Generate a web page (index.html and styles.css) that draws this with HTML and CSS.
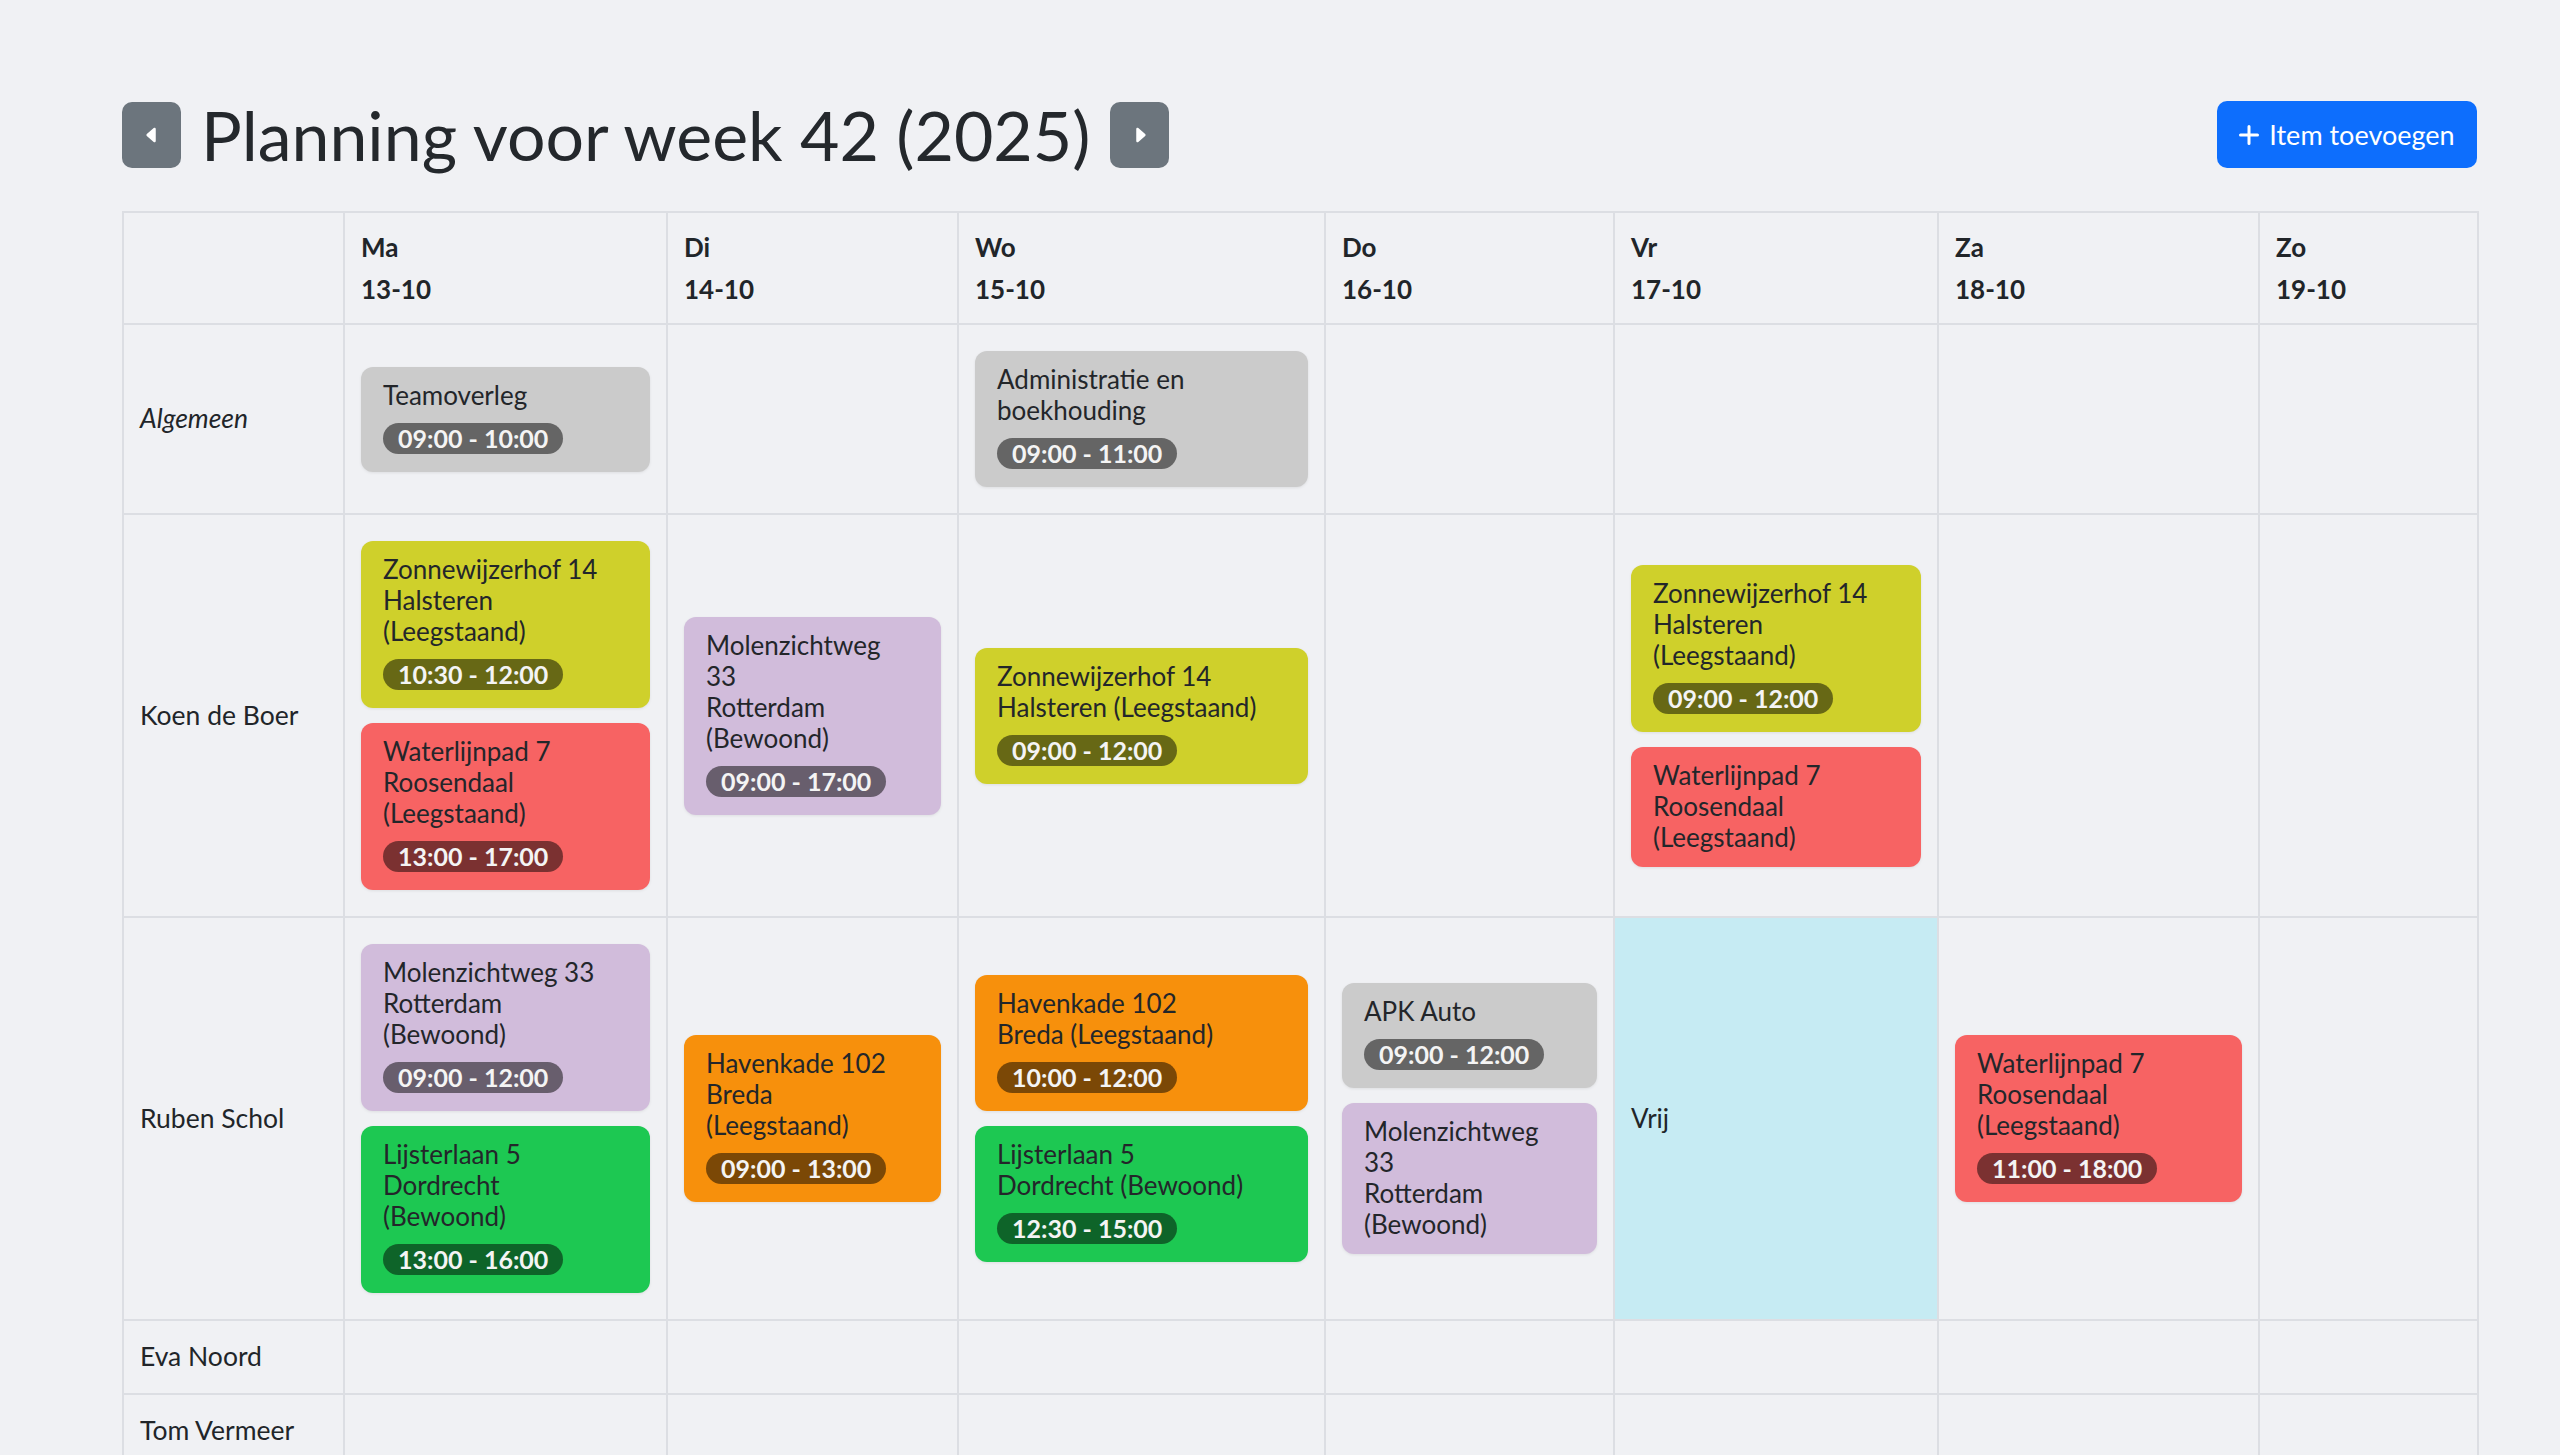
FILE: index.html
```html
<!DOCTYPE html>
<html lang="nl">
<head>
<meta charset="utf-8">
<title>Planning voor week 42 (2025)</title>
<link rel="stylesheet" href="styles.css">
</head>
<body>
<div class="page">
  <header class="toolbar">
    <div class="week-nav">
      <button class="nav-btn" type="button" aria-label="Vorige week">
        <svg viewBox="0 0 16 16" class="caret"><path d="m3.86 8.753 5.482 4.796c.646.566 1.658.106 1.658-.753V3.204a1 1 0 0 0-1.659-.753l-5.48 4.796a1 1 0 0 0 0 1.506z"/></svg>
      </button>
      <h1 class="title">Planning voor week 42 (2025)</h1>
      <button class="nav-btn" type="button" aria-label="Volgende week">
        <svg viewBox="0 0 16 16" class="caret"><path d="m12.14 8.753-5.482 4.796c-.646.566-1.658.106-1.658-.753V3.204a1 1 0 0 1 1.659-.753l5.48 4.796a1 1 0 0 1 0 1.506z"/></svg>
      </button>
    </div>
    <button class="add-btn" type="button">
      <svg viewBox="0 0 20 20" class="plus"><path d="M10 1.5v17M1.5 10h17"/></svg>
      <span>Item toevoegen</span>
    </button>
  </header>

  <table class="planning">
    <colgroup>
      <col class="c-name"><col class="c-ma"><col class="c-di"><col class="c-wo"><col class="c-do"><col class="c-vr"><col class="c-za"><col class="c-zo">
    </colgroup>
    <thead>
      <tr>
        <th></th>
        <th>Ma<br>13-10</th>
        <th>Di<br>14-10</th>
        <th>Wo<br>15-10</th>
        <th>Do<br>16-10</th>
        <th>Vr<br>17-10</th>
        <th>Za<br>18-10</th>
        <th>Zo<br>19-10</th>
      </tr>
    </thead>
    <tbody>
      <tr>
        <td class="name"><em>Algemeen</em></td>
        <td><div class="stack">
          <div class="item gray"><div class="item-text">Teamoverleg</div><span class="badge">09:00 - 10:00</span></div>
        </div></td>
        <td></td>
        <td><div class="stack">
          <div class="item gray"><div class="item-text">Administratie en<br>boekhouding</div><span class="badge">09:00 - 11:00</span></div>
        </div></td>
        <td></td><td></td><td></td><td></td>
      </tr>
      <tr>
        <td class="name">Koen de Boer</td>
        <td><div class="stack">
          <div class="item yellow"><div class="item-text">Zonnewijzerhof 14<br>Halsteren<br>(Leegstaand)</div><span class="badge">10:30 - 12:00</span></div>
          <div class="item red"><div class="item-text">Waterlijnpad 7<br>Roosendaal<br>(Leegstaand)</div><span class="badge">13:00 - 17:00</span></div>
        </div></td>
        <td><div class="stack">
          <div class="item purple"><div class="item-text">Molenzichtweg<br>33<br>Rotterdam<br>(Bewoond)</div><span class="badge">09:00 - 17:00</span></div>
        </div></td>
        <td><div class="stack">
          <div class="item yellow"><div class="item-text">Zonnewijzerhof 14<br>Halsteren (Leegstaand)</div><span class="badge">09:00 - 12:00</span></div>
        </div></td>
        <td></td>
        <td><div class="stack">
          <div class="item yellow"><div class="item-text">Zonnewijzerhof 14<br>Halsteren<br>(Leegstaand)</div><span class="badge">09:00 - 12:00</span></div>
          <div class="item red"><div class="item-text">Waterlijnpad 7<br>Roosendaal<br>(Leegstaand)</div></div>
        </div></td>
        <td></td><td></td>
      </tr>
      <tr>
        <td class="name">Ruben Schol</td>
        <td><div class="stack">
          <div class="item purple"><div class="item-text">Molenzichtweg 33<br>Rotterdam<br>(Bewoond)</div><span class="badge">09:00 - 12:00</span></div>
          <div class="item green"><div class="item-text">Lijsterlaan 5<br>Dordrecht<br>(Bewoond)</div><span class="badge">13:00 - 16:00</span></div>
        </div></td>
        <td><div class="stack">
          <div class="item orange"><div class="item-text">Havenkade 102<br>Breda<br>(Leegstaand)</div><span class="badge">09:00 - 13:00</span></div>
        </div></td>
        <td><div class="stack">
          <div class="item orange"><div class="item-text">Havenkade 102<br>Breda (Leegstaand)</div><span class="badge">10:00 - 12:00</span></div>
          <div class="item green"><div class="item-text">Lijsterlaan 5<br>Dordrecht (Bewoond)</div><span class="badge">12:30 - 15:00</span></div>
        </div></td>
        <td><div class="stack">
          <div class="item gray"><div class="item-text">APK Auto</div><span class="badge">09:00 - 12:00</span></div>
          <div class="item purple"><div class="item-text">Molenzichtweg<br>33<br>Rotterdam<br>(Bewoond)</div></div>
        </div></td>
        <td class="free">Vrij</td>
        <td><div class="stack">
          <div class="item red"><div class="item-text">Waterlijnpad 7<br>Roosendaal<br>(Leegstaand)</div><span class="badge">11:00 - 18:00</span></div>
        </div></td>
        <td></td>
      </tr>
      <tr>
        <td class="name">Eva Noord</td>
        <td></td><td></td><td></td><td></td><td></td><td></td><td></td>
      </tr>
      <tr>
        <td class="name">Tom Vermeer</td>
        <td></td><td></td><td></td><td></td><td></td><td></td><td></td>
      </tr>
    </tbody>
  </table>
</div>
</body>
</html>
```

FILE: styles.css
```css
html, body {
  margin: 0;
  padding: 0;
  background: #f0f1f4;
}

body {
  font-family: "Lato", "Noto Sans", sans-serif;
  color: #212529;
  font-size: 26px;
  line-height: 1.5;
}

.page {
  padding: 101px 83px 40px 122px;
}

.toolbar {
  display: flex;
  align-items: center;
  justify-content: space-between;
  height: 67px;
  margin-bottom: 43px;
}

.week-nav {
  display: flex;
  align-items: center;
  gap: 20px;
}

.nav-btn {
  width: 59px;
  height: 66px;
  border: 0;
  border-radius: 10px;
  background: #6c757d;
  display: flex;
  align-items: center;
  justify-content: center;
  padding: 0;
}

.caret {
  width: 20px;
  height: 20px;
  fill: #ffffff;
}

.title {
  margin: 0;
  font-size: 68px;
  font-weight: 400;
  line-height: 1.2;
  color: #24282c;
}

.add-btn {
  height: 67px;
  width: 260px;
  border: 0;
  border-radius: 10px;
  background: #0d6efd;
  color: #ffffff;
  font-family: "Lato", "Noto Sans", sans-serif;
  font-size: 27px;
  display: flex;
  align-items: center;
  justify-content: center;
  gap: 10px;
  padding: 0 20px;
}

.plus {
  width: 20px;
  height: 20px;
  fill: none;
  stroke: #ffffff;
  stroke-width: 3;
  stroke-linecap: round;
}

.planning {
  width: 2355px;
  table-layout: fixed;
  border-collapse: collapse;
}

.c-name { width: 221px; }
.c-ma { width: 323px; }
.c-di { width: 291px; }
.c-wo { width: 367px; }
.c-do { width: 289px; }
.c-vr { width: 324px; }
.c-za { width: 321px; }
.c-zo { width: 219px; }

.planning th,
.planning td {
  border: 2px solid #dcdee3;
  padding: 16px 16px;
  vertical-align: middle;
  text-align: left;
}

.planning th {
  font-weight: 700;
  vertical-align: top;
  line-height: 42px;
  padding-top: 13px;
  padding-bottom: 13px;
}

.name {
  font-size: 26.5px;
}

.free {
  background: #c6ebf3;
}

.stack {
  display: flex;
  flex-direction: column;
  gap: 15px;
  padding: 10px 0;
}

.item {
  border-radius: 12px;
  padding: 13px 22px 14px;
  box-shadow: 0 1px 3px rgba(0, 0, 0, 0.08);
  color: #23262a;
}

.item-text {
  font-size: 26px;
  line-height: 31px;
}

.badge {
  display: inline-block;
  margin-top: 12px;
  padding: 5px 15px;
  border-radius: 999px;
  background: rgba(0, 0, 0, 0.5);
  color: #f4f4f4;
  font-size: 25px;
  font-weight: 700;
  line-height: 21px;
  white-space: nowrap;
}

.gray { background: #cbcbcb; }
.yellow { background: #cfd02b; }
.red { background: #f76363; }
.purple { background: #d1bcdb; }
.orange { background: #f7900c; }
.green { background: #1dc852; }
```
